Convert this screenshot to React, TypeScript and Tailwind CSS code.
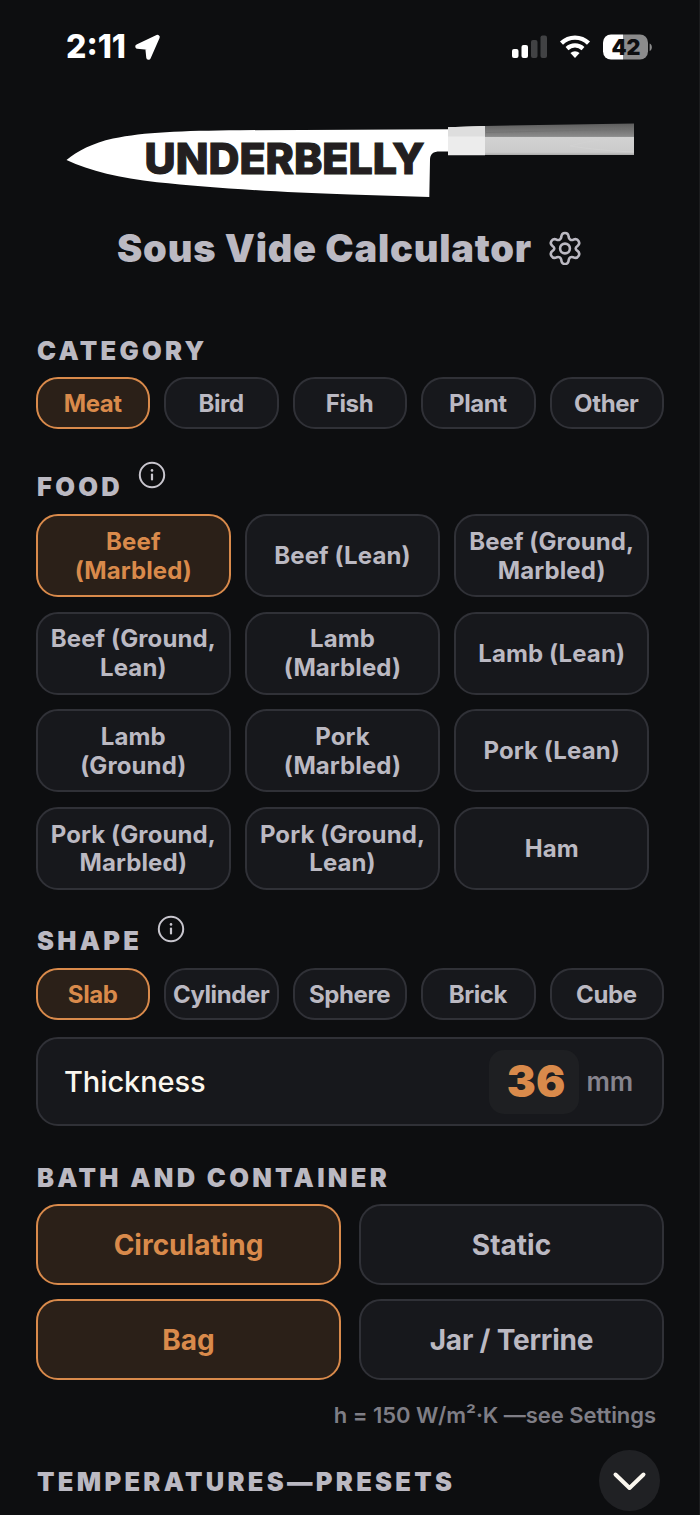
import React from "react";

function Choice({ label, active = false, className = "" }: { label: string; active?: boolean; className?: string }) {
  return (
    <button
      className={`flex items-center justify-center border-2 text-center font-[650] ${
        active ? "border-[#d98a4b] bg-[#2b2018] text-[#d98a4b]" : "border-[#303137] bg-[#17181c] text-[#bbb9c2]"
      } ${className}`}
    >
      {label}
    </button>
  );
}

function Heading({ text, info = false }: { text: string; info?: boolean }) {
  return (
    <div className="flex h-8 items-center">
      <h2 className="whitespace-nowrap pl-px text-[25.5px] leading-8 font-black tracking-[3.3px] text-[#bbb9c2]">{text}</h2>
      {info && (
        <svg className="relative -top-3 ml-[15px] shrink-0" width="28" height="28" viewBox="0 0 28 28" fill="none" stroke="#c8c6ce" strokeWidth="2">
          <circle cx="14" cy="14" r="12.2" />
          <path d="M14 13.5v5" strokeWidth="2.200" strokeLinecap="round" />
          <circle cx="14" cy="9.4" r="1.3" fill="#c8c6ce" stroke="none" />
        </svg>
      )}
    </div>
  );
}

function StatusBar() {
  return (
    <div className="flex h-[94px] items-center justify-between pr-[45px] pl-[66px]">
      <div className="flex items-center">
        <span className="text-[32px] leading-8 font-extrabold text-white">2:11</span>
        <svg className="ml-[8px]" width="27" height="27" viewBox="0 0 27 27" fill="#fff" stroke="#fff" strokeWidth="4.500" strokeLinejoin="round">
          <path d="M23.500 3 3.500 12.500 13.500 13.500l1 10z" />
        </svg>
      </div>
      <svg width="142" height="28" viewBox="0 0 142 28">
        <rect x="0" y="16" width="6.500" height="9" rx="2" fill="#fff" />
        <rect x="9.500" y="12" width="6.500" height="13" rx="2" fill="#fff" />
        <rect x="19" y="7" width="6.500" height="18" rx="2" fill="#414244" />
        <rect x="28.500" y="2.500" width="6.500" height="22.500" rx="2" fill="#414244" />
        <g fill="none" stroke="#fff">
          <path d="M49.500 10.100a19.500 19.500 0 0 1 27 0" strokeWidth="4.400" />
          <path d="M55 15.600a11.800 11.800 0 0 1 16 0" strokeWidth="4.200" />
        </g>
        <path d="M58.400 20a7 7 0 0 1 9.200 0L63 25z" fill="#fff" />
        <path d="M99 1.500h12v25h-12a8 8 0 0 1-8-8v-9a8 8 0 0 1 8-8z" fill="#fff" />
        <path d="M111 1.500h17a8 8 0 0 1 8 8v9a8 8 0 0 1-8 8h-17z" fill="#8b8b8c" />
        <path d="M137.600 10.500c3 1.200 3 6.300 0 7.500z" fill="#8b8b8c" />
        <text x="114" y="21.800" textAnchor="middle" className="font-['Inter'] text-[21.5px] font-black" fill="#0d0e10" textLength="29" lengthAdjust="spacingAndGlyphs">
          42
        </text>
      </svg>
    </div>
  );
}

function Logo() {
  return (
    <svg width="570" height="80" viewBox="65 120 570 80">
      <defs>
        <linearGradient id="dark" x1="0" y1="0" x2="0" y2="1">
          <stop offset="0" stopColor="#5d5d5d" />
          <stop offset="1" stopColor="#8b8b8b" />
        </linearGradient>
        <linearGradient id="light" x1="0" y1="0" x2="0" y2="1">
          <stop offset="0" stopColor="#d2d2d2" />
          <stop offset="0.85" stopColor="#cbcbcb" />
          <stop offset="1" stopColor="#aaaaaa" />
        </linearGradient>
      </defs>
      <path d="M66.500 160C77 151 93 143 113 138.500C145 132 180 130.700 240 130.200L449 129.200V151.500H440C433 151.500 430 154 430 160L429.300 197L350 194.500C270 192 210 187.500 157 182.300C120 178 90 171 66.500 160Z" fill="#fff" />
      <path d="M448 127.200 485 126V155.200H448Z" fill="#ececec" />
      <path d="M448 127.200 485 126V136.500H448Z" fill="#dedede" />
      <path d="M485 126 634 123.500V136.500H485Z" fill="url(#dark)" />
      <path d="M485 136.500H634V155H485Z" fill="url(#light)" />
      <path d="M486 132.500 634 129" stroke="#707070" strokeWidth="0.700" />
      <path d="M570 146c18-5 38-8 64-8M570 146c20 3 40 5 64 6" fill="none" stroke="#d2d2d2" strokeWidth="0.800" />
      <text x="144.500" y="173.500" className="font-['Inter'] text-[43px] font-extrabold" fill="#231f20" stroke="#231f20" strokeWidth="1.200" textLength="280" lengthAdjust="spacingAndGlyphs">
        UNDERBELLY
      </text>
    </svg>
  );
}

const foods = [
  "Beef (Marbled)", "Beef (Lean)", "Beef (Ground, Marbled)",
  "Beef (Ground, Lean)", "Lamb (Marbled)", "Lamb (Lean)",
  "Lamb (Ground)", "Pork (Marbled)", "Pork (Lean)",
  "Pork (Ground, Marbled)", "Pork (Ground, Lean)", "Ham",
];

function PillRow({ items }: { items: string[] }) {
  return (
    <div className="grid h-[52px] grid-cols-5 gap-[14px]">
      {items.map((item, i) => (
        <Choice key={item} label={item} active={i === 0} className="rounded-[22px] pt-px pr-px text-[24px] leading-7 tracking-[-0.4px]" />
      ))}
    </div>
  );
}

export default function App() {
  return (
    <div className="h-[1515px] w-[700px] overflow-hidden border-r border-[#1b1c1e] bg-[#0d0e10] font-['Inter',sans-serif]">
      <StatusBar />
      <div className="mt-[26px] flex h-20 pl-[65px]">
        <Logo />
      </div>
      <div className="mt-6 flex h-12 items-center pl-[117px]">
        <h1 className="w-[415px] text-[38px] leading-[48px] font-black whitespace-nowrap tracking-[0.8px] text-[#bbb9c2]">Sous Vide Calculator</h1>
        <svg className="ml-[16px] shrink-0" width="34" height="34" viewBox="0 0 34 34" fill="none" stroke="#bbb9c2" strokeWidth="2.600" strokeLinejoin="round">
          <path d="M17 2C19.500 2 20.500 3.500 20.700 6C21 8.500 23 9.700 25.300 8.700C27.600 7.600 29.400 8 30.600 10.100C31.800 12.200 31.200 14 29.200 15.300C27.200 16.700 27.200 18.300 29.200 19.700C31.200 21 31.800 22.800 30.600 24.900C29.400 27 27.600 27.400 25.300 26.300C23 25.300 21 26.500 20.700 29C20.500 31.500 19.500 33 17 33C14.500 33 13.500 31.500 13.300 29C13 26.500 11 25.300 8.700 26.300C6.400 27.400 4.600 27 3.400 24.900C2.200 22.800 2.800 21 4.800 19.700C6.800 18.300 6.800 16.700 4.800 15.300C2.800 14 2.200 12.200 3.400 10.100C4.600 8 6.400 7.600 8.700 8.700C11 9.700 13 8.500 13.300 6C13.500 3.500 14.500 2 17 2Z" />
          <circle cx="17" cy="17.500" r="4.900" />
        </svg>
      </div>

      <main className="flex flex-col pr-[35px] pl-9">
        <section className="mt-[63px]">
          <Heading text="CATEGORY" />
          <div className="mt-[10px]">
            <PillRow items={["Meat", "Bird", "Fish", "Plant", "Other"]} />
          </div>
        </section>

        <section className="mt-[42px]">
          <Heading text="FOOD" info />
          <div className="mt-[11px] grid h-[376px] w-[613px] grid-cols-3 grid-rows-4 gap-[14.500px]">
            {foods.map((food, i) => (
              <Choice key={food} label={food} active={i === 0} className="rounded-[22px] px-[10px] pt-0.5 text-[24px] leading-[28.700px] tracking-[0.1px]" />
            ))}
          </div>
        </section>

        <section className="mt-[35px]">
          <Heading text="SHAPE" info />
          <div className="mt-[11px]">
            <PillRow items={["Slab", "Cylinder", "Sphere", "Brick", "Cube"]} />
          </div>
          <div className="mt-[17px] flex h-[89px] items-center rounded-[22px] border-2 border-[#303137] bg-[#17181c] pr-[29px] pl-[26px]">
            <span className="text-[29px] font-[550] tracking-[-0.1px] text-[#faf6ee]">Thickness</span>
            <div className="ml-auto flex h-16 w-[90px] items-center justify-center rounded-[15px] bg-[#1e1f22] pl-[5px] text-[43.5px] font-black text-[#d98a4b]">36</div>
            <span className="ml-2 text-[26px] font-semibold tracking-[-0.2px] text-[#86848d]">mm</span>
          </div>
        </section>

        <section className="mt-9">
          <Heading text="BATH AND CONTAINER" />
          <div className="mt-[10px] grid grid-cols-2 gap-x-[18px] gap-y-[14px]">
            <Choice label="Circulating" active className="h-[81px] rounded-[22px] text-[28px]" />
            <Choice label="Static" className="h-[81px] rounded-[22px] text-[28px]" />
            <Choice label="Bag" active className="h-[81px] rounded-[22px] text-[28px]" />
            <Choice label="Jar / Terrine" className="h-[81px] rounded-[22px] text-[28px] tracking-[-0.2px]" />
          </div>
          <p className="mt-[19px] h-8 pr-2 text-right text-[22px] leading-8 font-semibold tracking-[-0.05px] text-[#7f7e86]">h = 150 W/m²·K —see Settings</p>
        </section>

        <div className="mt-[18px] flex h-[62px] items-center justify-between pr-1">
          <div className="pt-1">
            <Heading text="TEMPERATURES—PRESETS" />
          </div>
          <svg width="61" height="61" viewBox="0 0 61 61">
            <circle cx="30.500" cy="30.500" r="30.500" fill="#202124" />
            <path d="m16.500 24.500 14 13.500 14-13.500" fill="none" stroke="#faf6ee" strokeWidth="4" strokeLinecap="round" strokeLinejoin="round" />
          </svg>
        </div>
      </main>
    </div>
  );
}
